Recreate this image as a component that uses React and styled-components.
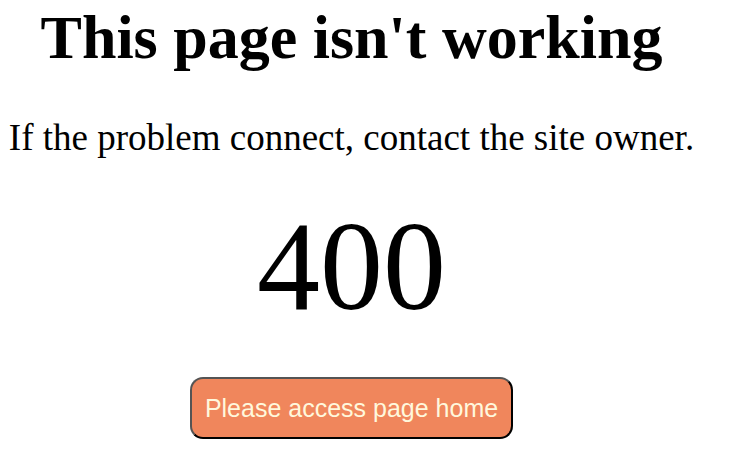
import React from "react";
import styled, { createGlobalStyle } from "styled-components";

const GlobalStyle = createGlobalStyle`
  body {
    margin: 0;
    background: #fff;
    color: #000;
    font-family: "Liberation Serif", "Times New Roman", serif;
  }
`;

const ErrorPage = styled.main`
  display: flex;
  flex-direction: column;
  align-items: center;
  padding-right: 53px;
  text-align: center;
  white-space: nowrap;
`;

const Title = styled.h1`
  margin: 0;
  font-size: 62px;
  line-height: 74px;
  font-weight: 700;
`;

const Message = styled.p`
  margin: 24px 0 0;
  font-size: 37px;
  line-height: 80px;
`;

const StatusCode = styled.p`
  margin: 16px 0 0;
  font-size: 126px;
  line-height: 146px;
`;

const HomeButton = styled.button`
  margin-top: 37px;
  padding: 14px 13px;
  border: 2px outset #000;
  border-radius: 13px;
  background: #f0865c;
  color: #fff8dc;
  font-family: "Liberation Sans", Arial, sans-serif;
  font-size: 25px;
  line-height: 30px;
  cursor: pointer;
`;

export default function App() {
  return (
    <>
      <GlobalStyle />
      <ErrorPage>
        <Title>This page isn't working</Title>
        <Message>If the problem connect, contact the site owner.</Message>
        <StatusCode>400</StatusCode>
        <HomeButton type="button">Please access page home</HomeButton>
      </ErrorPage>
    </>
  );
}
